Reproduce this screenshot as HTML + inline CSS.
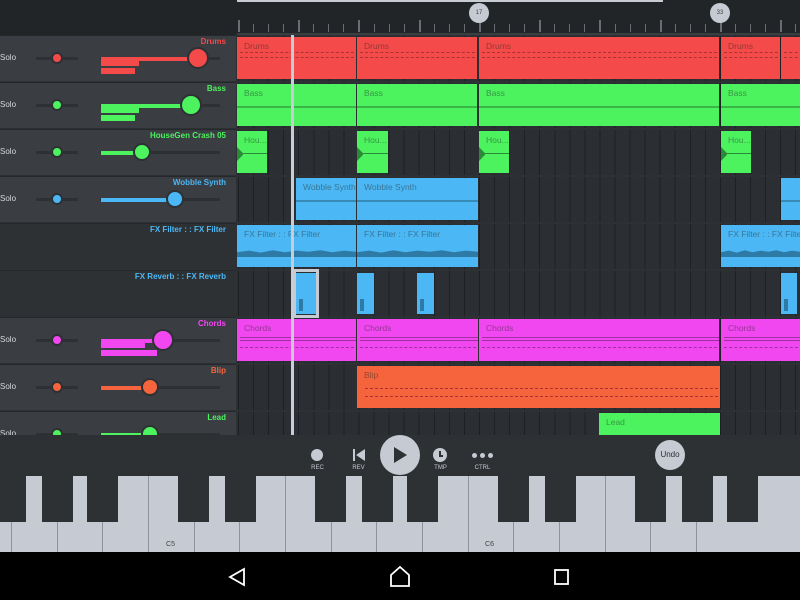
<!DOCTYPE html>
<html><head><meta charset="utf-8"><style>
*{margin:0;padding:0;box-sizing:border-box}
body{width:800px;height:600px;overflow:hidden;background:#2e3134;font-family:"Liberation Sans",sans-serif;position:relative}
.a{position:absolute}
.top{left:0;top:0;width:800px;height:35px;background:#222528}
.lbl{font-size:8.5px;color:#222;position:absolute;left:7px;top:4px;opacity:.45;white-space:nowrap;overflow:hidden}
.name{position:absolute;left:0;width:226px;text-align:right;font-size:8px;font-weight:bold;white-space:nowrap}
.solo{position:absolute;left:0;font-size:8px;color:#d5d8dc}
</style></head><body>
<div class="a top"></div>
<div class="a" style="left:237px;top:0;width:426px;height:2px;background:#c9ccd2"></div>
<div id="ruler"></div>
<div id="rows"></div>
<div class="a" style="left:291px;top:35px;width:3px;height:400px;background:#c8ccd4"></div>
<div class="a" style="left:0;top:435px;width:800px;height:41px;background:#2e3134"></div>
<div class="a" style="left:311px;top:449px;width:12px;height:12px;border-radius:50%;background:#c5cad3"></div>
<div class="a" style="left:353px;top:449px;width:2px;height:12px;background:#c5cad3"></div>
<svg class="a" style="left:355px;top:449px" width="12" height="12"><path d="M1 6 L10 0 L10 12Z" fill="#c5cad3"/></svg>
<div class="a" style="left:380px;top:435px;width:40px;height:40px;border-radius:50%;background:#c5cad3"></div>
<svg class="a" style="left:393px;top:446px" width="16" height="18"><path d="M1 1 L14 9 L1 17Z" fill="#2e3134"/></svg>
<div class="a" style="left:433px;top:448px;width:14px;height:14px;border-radius:50%;background:#c5cad3"></div>
<div class="a" style="left:439px;top:451px;width:1.5px;height:5px;background:#2e3134"></div>
<div class="a" style="left:439px;top:455px;width:4px;height:1.5px;background:#2e3134"></div>
<div class="a" style="left:472px;top:453px;width:5px;height:5px;border-radius:50%;background:#c5cad3"></div>
<div class="a" style="left:480px;top:453px;width:5px;height:5px;border-radius:50%;background:#c5cad3"></div>
<div class="a" style="left:488px;top:453px;width:5px;height:5px;border-radius:50%;background:#c5cad3"></div>
<div class="a" style="left:305px;top:465px;width:25px;text-align:center;font-size:6px;color:#c5cad3">REC</div>
<div class="a" style="left:346px;top:465px;width:25px;text-align:center;font-size:6px;color:#c5cad3">REV</div>
<div class="a" style="left:428px;top:465px;width:25px;text-align:center;font-size:6px;color:#c5cad3">TMP</div>
<div class="a" style="left:470px;top:465px;width:25px;text-align:center;font-size:6px;color:#c5cad3">CTRL</div>
<div class="a" style="left:655px;top:440px;width:30px;height:30px;border-radius:50%;background:#c5cad3;font-size:8px;color:#2e3134;text-align:center;line-height:30px">Undo</div>
<div id="keys"></div>
<div class="a" style="left:0;top:552px;width:800px;height:48px;background:#000"></div>
<svg class="a" style="left:0;top:552px" width="800" height="48">
<path d="M244 17 L230 25 L244 33Z" fill="none" stroke="#fff" stroke-width="1.8"/>
<path d="M391 34 V23 L400 15 L409 23 V34Z" fill="none" stroke="#fff" stroke-width="1.8"/>
<rect x="555" y="18" width="13" height="14" fill="none" stroke="#fff" stroke-width="1.8"/>
</svg>
<script>
let h='';
const bw=15.06;
for(let i=0;i<38;i++){let x=238+i*bw;let maj=i%4==0;h+=`<div class="a" style="left:${x}px;top:${maj?20:24}px;width:${maj?2:1}px;height:${maj?12:8}px;background:#6a6e74"></div>`;}
h+=`<div class="a" style="left:237px;top:33px;width:563px;height:2px;background:#3a3d42"></div>`;
[[479,'17'],[720,'33']].forEach(m=>{h+=`<div class="a" style="left:${m[0]-10}px;top:3px;width:20px;height:20px;border-radius:50%;background:#c5cad3;font-size:6px;color:#444;text-align:center;line-height:20px">${m[1]}</div>`});
document.getElementById('ruler').innerHTML=h;h='';
const rows=[
['Drums','#f44a4a',1,[[237,356],[357,477],[479,719],[721,780],[781,800]]],
['Bass','#4cf35f',1,[[237,356],[357,477],[479,719],[721,800]]],
['HouseGen Crash 05','#4cf35f',1,[[237,267],[357,388],[479,509],[721,751]]],
['Wobble Synth','#4bb8f5',1,[[296,356],[357,478],[781,800]]],
['FX Filter :  : FX Filter','#4bb8f5',0,[[237,356],[357,478],[721,800]]],
['FX Reverb :  : FX Reverb','#4bb8f5',0,[[296,316],[357,374],[417,434],[781,797]]],
['Chords','#f047f0',1,[[237,356],[357,478],[479,719],[721,800]]],
['Blip','#f5643c',1,[[357,720]]],
['Lead','#4cf35f',1,[[599,720]]]];
const labs=['Drums','Bass','Hou...','Wobble Synth','FX Filter :  : FX Filter','','Chords','Blip','Lead'];
const knob=[198,191,142,175,0,0,163,150,150];
rows.forEach((r,i)=>{
 const y=35+i*47, H=Math.min(46,435-y);
 h+=`<div class="a" style="left:0;top:${y}px;width:236px;height:${H}px;background:${r[2]?'#3a3d42':'#2e3134'};border-top:1px solid #25282b"></div>`;
 h+=`<div class="name" style="top:${y+2}px;color:${r[1]}">${r[0]}</div>`;
 h+=`<div class="a" style="left:237px;top:${y+1}px;width:563px;height:${H-1}px;background:#2b2e32;background-image:repeating-linear-gradient(90deg,#1e2124 0 1px,transparent 1px ${bw}px);background-position:1px 0"></div>`;
 if(r[2]){
  const cy=y+23;
  h+=`<div class="solo" style="top:${cy-5}px">Solo</div>`;
  h+=`<div class="a" style="left:36px;top:${cy-1}px;width:42px;height:3px;background:#2e3134"></div>`;
  h+=`<div class="a" style="left:51px;top:${cy-6}px;width:12px;height:12px;border-radius:50%;background:${r[1]};border:2px solid #2e3134"></div>`;
  h+=`<div class="a" style="left:100px;top:${cy-1}px;width:120px;height:3px;background:#2e3134"></div>`;
  const k=knob[i], big=(i==0||i==1||i==6);
  h+=`<div class="a" style="left:101px;top:${cy-1}px;width:${k-101}px;height:4px;background:${r[1]}"></div>`;
  const rr=big?11:9;
  h+=`<div class="a" style="left:${k-rr}px;top:${cy-rr}px;width:${rr*2}px;height:${rr*2}px;border-radius:50%;background:${r[1]};border:2px solid #2e3134"></div>`;
  if(big){h+=`<div class="a" style="left:101px;top:${cy+1}px;width:${i==6?44:38}px;height:7px;background:${r[1]}"></div><div class="a" style="left:101px;top:${cy+10}px;width:${i==6?56:34}px;height:6px;background:${r[1]}"></div>`;}
 }
 r[3].forEach(c=>{
  let top=y+2,hh=Math.min(42,435-top);
  if(i==5){top=y+3;hh=41;}
  h+=`<div class="a" style="left:${c[0]}px;top:${top}px;width:${c[1]-c[0]}px;height:${hh}px;background:${r[1]};overflow:hidden">`;
  if(labs[i]&&c[1]-c[0]>25)h+=`<div class="lbl">${c[1]-c[0]<40?'Hou...':labs[i]}</div>`;
  if(i==0)h+=`<div class="a" style="left:3px;top:15px;width:100%;height:1px;border-top:1px dashed #a33"></div><div class="a" style="left:3px;top:20px;width:100%;border-top:1px dashed #a33"></div>`;
  if(i==1||i==3)h+=`<div class="a" style="left:0;top:22px;width:100%;height:2px;background:rgba(0,0,0,.25)"></div>`;
  if(i==2)h+=`<div class="a" style="left:0;top:22px;width:100%;height:1px;background:#2a8a3a"></div><div class="a" style="left:0;top:16px;width:6px;height:14px;background:#2a8a3a;clip-path:polygon(0 0,100% 45%,100% 55%,0 100%)"></div>`;
  if(i==4)h+=`<div class="a" style="left:0;top:24px;width:100%;height:8px;background:#2d7aa6;clip-path:polygon(0 40%,10% 20%,20% 45%,30% 15%,40% 40%,50% 20%,60% 35%,70% 15%,80% 40%,90% 20%,100% 35%,100% 100%,0 100%)"></div>`;
  if(i==6)h+=`<div class="a" style="left:3px;top:18px;width:100%;height:4px;border-top:1px solid #a030a0;border-bottom:1px solid #a030a0"></div><div class="a" style="left:3px;top:28px;width:100%;border-top:1px dashed #a030a0"></div>`;
  if(i==7)h+=`<div class="a" style="left:8px;top:22px;width:100%;border-top:1px dashed #a33"></div><div class="a" style="left:8px;top:30px;width:100%;border-top:1px dashed #a33"></div>`;
  if(i==5)h+=`<div class="a" style="left:3px;top:26px;width:4px;height:12px;background:#2d7aa6"></div>`;
  h+=`</div>`;
 });
 if(i==5)h+=`<div class="a" style="left:293px;top:${y-1}px;width:26px;height:49px;border:3px solid #c5cad3"></div>`;
});
document.getElementById('rows').innerHTML=h;h='';
h+=`<div class="a" style="left:0;top:476px;width:800px;height:76px;background:#c5cad3"></div>`;
const wb=45.65, c0=148-7*wb;
for(let i=0;i<20;i++){let x=c0+i*wb;h+=`<div class="a" style="left:${x.toFixed(1)}px;top:476px;width:1px;height:76px;background:#8f949c"></div>`;}
const blk=[30,77,167,214,259];
for(let o=-1;o<3;o++){const base=148+o*wb*7;blk.forEach(b=>{const x=base+b;h+=`<div class="a" style="left:${x.toFixed(1)}px;top:476px;width:31px;height:46px;background:#2e3134"></div>`;});}
h+=`<div class="a" style="left:148px;top:541px;width:45px;text-align:center;font-size:7px;color:#444">C5</div>`;
h+=`<div class="a" style="left:467px;top:541px;width:45px;text-align:center;font-size:7px;color:#444">C6</div>`;
document.getElementById('keys').innerHTML=h;
</script>
</body></html>
